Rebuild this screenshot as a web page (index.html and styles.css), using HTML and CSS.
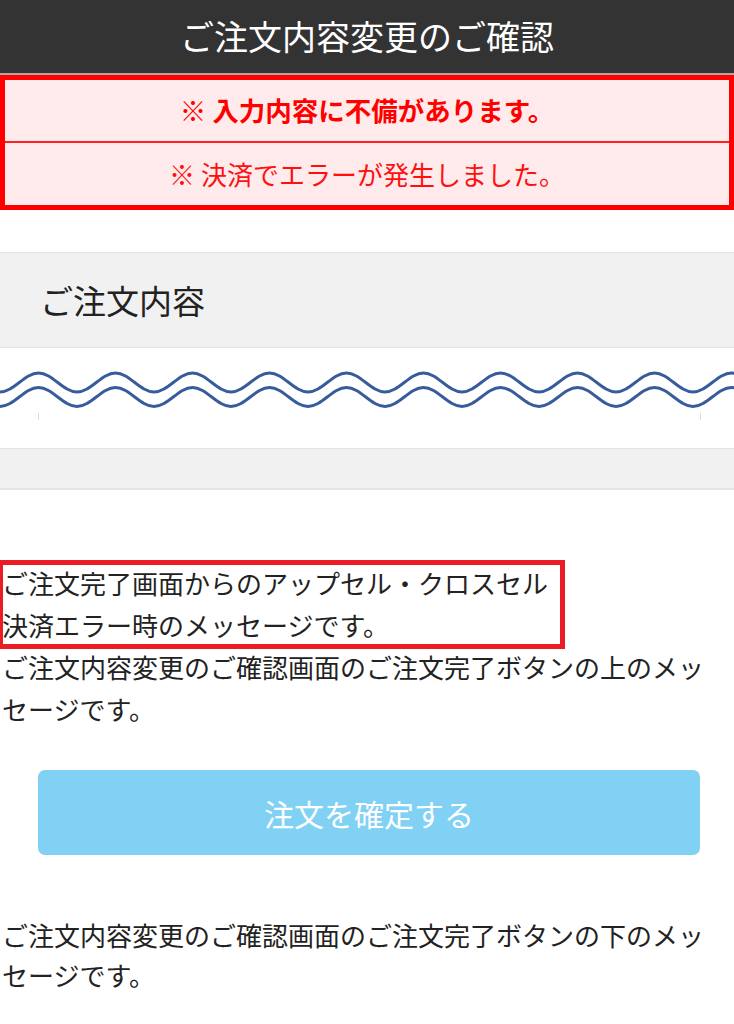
FILE: index.html
```html
<!DOCTYPE html>
<html lang="ja">
<head>
<meta charset="utf-8">
<title>ご注文内容変更のご確認</title>
<link rel="stylesheet" href="styles.css">
</head>
<body>
<header class="topbar">
  <h1 class="topbar-title">ご注文内容変更のご確認</h1>
</header>

<div class="errors">
  <p class="error-row error-row--strong">※ 入力内容に不備があります。</p>
  <p class="error-row">※ 決済でエラーが発生しました。</p>
</div>

<section class="order">
  <h2 class="order-head">ご注文内容</h2>
  <div class="order-cut">
    <svg class="wave" viewBox="0 0 734 100" width="734" height="100" aria-hidden="true">
      <path class="wave-line" d="M0,44 C14,44 24.5,25 38.5,25 S63,44 77,44 S101.5,25 115.5,25 S140,44 154,44 S178.5,25 192.5,25 S217,44 231,44 S255.5,25 269.5,25 S294,44 308,44 S332.5,25 346.5,25 S371,44 385,44 S409.5,25 423.5,25 S448,44 462,44 S486.5,25 500.5,25 S525,44 539,44 S563.5,25 577.5,25 S602,44 616,44 S640.5,25 654.5,25 S679,44 693,44 S717.5,25 731.5,25 S756,44 770,44"/>
      <path class="wave-line" transform="translate(0,14.5)" d="M0,44 C14,44 24.5,25 38.5,25 S63,44 77,44 S101.5,25 115.5,25 S140,44 154,44 S178.5,25 192.5,25 S217,44 231,44 S255.5,25 269.5,25 S294,44 308,44 S332.5,25 346.5,25 S371,44 385,44 S409.5,25 423.5,25 S448,44 462,44 S486.5,25 500.5,25 S525,44 539,44 S563.5,25 577.5,25 S602,44 616,44 S640.5,25 654.5,25 S679,44 693,44 S717.5,25 731.5,25 S756,44 770,44"/>
      <rect class="wave-tick" x="38" y="65" width="1" height="7"/>
      <rect class="wave-tick" x="700" y="65" width="1" height="7"/>
    </svg>
  </div>
  <div class="order-foot"></div>
</section>

<div class="messages">
  <div class="note">
    <p class="msg">ご注文完了画面からのアップセル・クロスセル<br>決済エラー時のメッセージです。</p>
    <span class="note-frame" aria-hidden="true"></span>
  </div>
  <p class="msg">ご注文内容変更のご確認画面のご注文完了ボタンの上のメッセージです。</p>
</div>

<div class="actions">
  <button class="confirm" type="button">注文を確定する</button>
</div>

<p class="msg msg--bottom">ご注文内容変更のご確認画面のご注文完了ボタンの下のメッセージです。</p>
</body>
</html>
```

FILE: styles.css
```css
* {
  box-sizing: border-box;
}

html, body {
  margin: 0;
  padding: 0;
  background: #ffffff;
}

body {
  width: 734px;
  font-family: "Noto Sans CJK JP", "Noto Sans", sans-serif;
  color: #222222;
}

.topbar {
  height: 75px;
  background: #333333;
  border-bottom: 2px solid #a9a9a9;
  display: flex;
  align-items: center;
  justify-content: center;
}

.topbar-title {
  margin: 0;
  font-size: 34px;
  font-weight: 400;
  color: #ffffff;
  line-height: 1;
  padding-bottom: 2px;
}

.errors {
  border: 5px solid #ff0000;
  background: #ffebeb;
}

.error-row {
  margin: 0;
  height: 62px;
  display: flex;
  align-items: center;
  justify-content: center;
  font-size: 26px;
  line-height: 1;
  color: #ff1010;
}

.error-row--strong {
  font-weight: 700;
  font-size: 26.5px;
  color: #ff0000;
  height: 63px;
  border-bottom: 2px solid #ff2020;
}

.order {
  margin-top: 42px;
}

.order-head {
  margin: 0;
  height: 96px;
  background: #f1f1f1;
  border-top: 1px solid #e4e4e4;
  border-bottom: 1px solid #e4e4e4;
  display: flex;
  align-items: center;
  padding-left: 40px;
  font-size: 33px;
  font-weight: 400;
  color: #222222;
  line-height: 1;
}

.order-cut {
  height: 100px;
}

.wave {
  display: block;
}

.wave-line {
  fill: none;
  stroke: #375b9b;
  stroke-width: 3;
}

.wave-tick {
  fill: #dddddd;
}

.order-foot {
  height: 42px;
  background: #f1f1f1;
  border-top: 1px solid #e4e4e4;
  border-bottom: 2px solid #e4e4e4;
}

.messages {
  margin-top: 72px;
}

.note {
  position: relative;
}

.note-frame {
  position: absolute;
  left: -2px;
  top: -2px;
  width: 567px;
  height: 89px;
  border: 5px solid #ec1c24;
  pointer-events: none;
}

.msg {
  margin: 0;
  padding: 0 16px 0 2px;
  font-size: 26px;
  line-height: 42px;
  color: #222222;
}

.actions {
  margin-top: 40px;
  padding: 0 34px 0 38px;
}

.confirm {
  display: block;
  width: 100%;
  height: 85px;
  border: none;
  border-radius: 7px;
  background: #81d1f5;
  color: #ffffff;
  font-family: inherit;
  font-size: 30px;
  font-weight: 400;
  padding: 0;
}

.msg--bottom {
  margin-top: 60px;
  line-height: 40px;
}
```
